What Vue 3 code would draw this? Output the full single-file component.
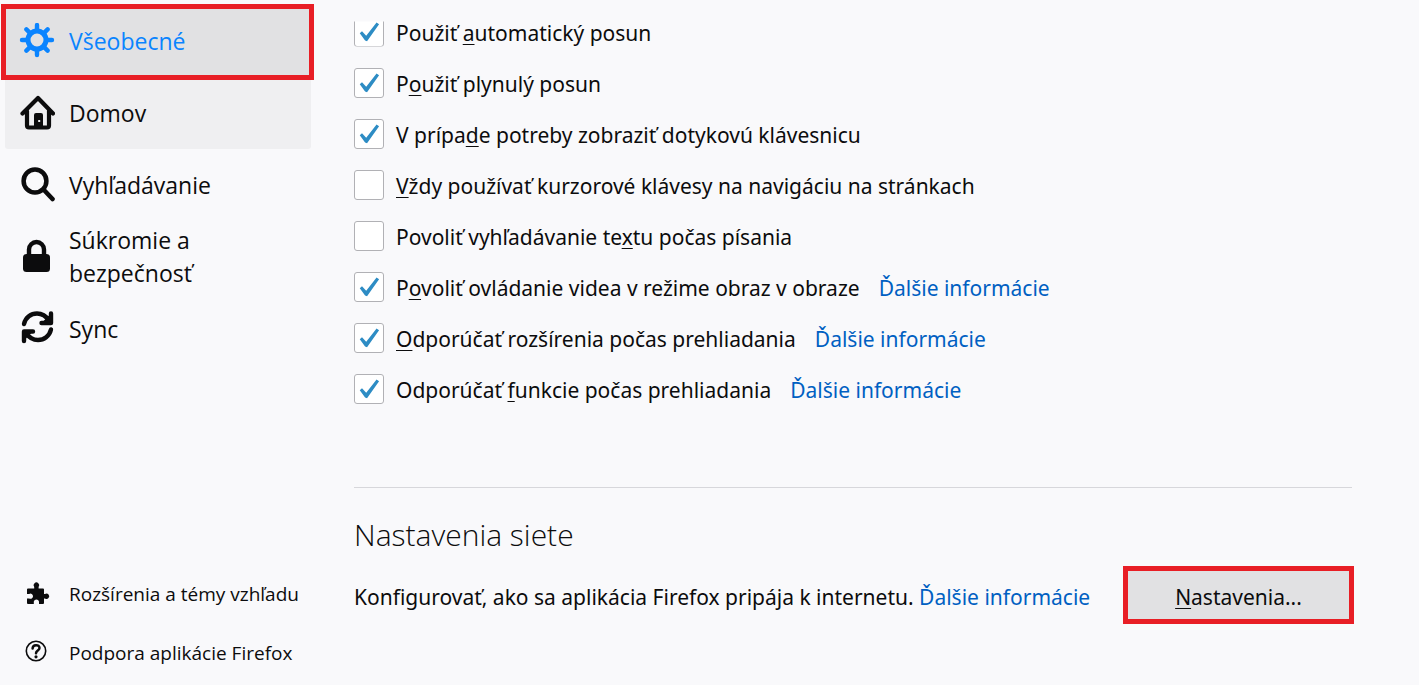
<template>
  <div class="preferences">
    <aside class="sidebar">
      <nav class="categories">
        <a
          v-for="item in categories"
          :key="item.id"
          href="#"
          class="category"
          :class="{ 'is-selected': item.id === selected, 'is-hovered': item.id === 'home' }"
          @click.prevent="selected = item.id"
        >
          <svg v-if="item.id === 'general'" class="icon" viewBox="0 0 36 36" fill="none" stroke="currentColor">
            <circle cx="18" cy="17" r="9" stroke-width="5" />
            <path
              d="M18 2v5M18 27v5M3 17h5M28 17h5M7.400 6.400l4 4M24.600 23.600l4 4M28.600 6.400l-4 4M11.400 23.600l-4 4"
              stroke-width="4.400"
              stroke-linecap="round"
            />
          </svg>
          <svg v-else-if="item.id === 'home'" class="icon" viewBox="0 0 36 36">
            <path
              d="M3.500 18.500 19 3l15 15.500M8 16v14.500q0 2 2 2h18q2 0 2-2V16"
              fill="none"
              stroke="currentColor"
              stroke-width="4.200"
              stroke-linecap="round"
              stroke-linejoin="round"
            />
            <path
              fill-rule="evenodd"
              fill="currentColor"
              d="M17 18h5q2 0 2 2V33h-9V20q0-2 2-2zM19.200 25v2h2v-2z"
            />
          </svg>
          <svg v-else-if="item.id === 'search'" class="icon" viewBox="0 0 36 36" fill="none" stroke="currentColor">
            <circle cx="16" cy="14" r="11.400" stroke-width="4.500" />
            <path d="M24.500 22.500l9 9.500" stroke-width="4.600" stroke-linecap="round" />
          </svg>
          <svg v-else-if="item.id === 'privacy'" class="icon" viewBox="0 0 36 36">
            <path d="M10 17v-6.500a7.500 7.500 0 0 1 15 0V17" fill="none" stroke="currentColor" stroke-width="4.400" />
            <rect x="4" y="15" width="27" height="18" rx="3.500" fill="currentColor" />
          </svg>
          <svg
            v-else
            class="icon"
            viewBox="0 2 36 36"
            fill="none"
            stroke="currentColor"
            stroke-width="4.400"
            stroke-linecap="round"
            stroke-linejoin="round"
          >
            <path d="M5 15C6.500 8.500 12 4.500 18 4.500c5 0 9 2.500 12 7M32 4.500v9.500h-9.500" />
            <path d="M25 13l6-6v6z" fill="currentColor" stroke-width="2" />
            <path d="M32 20.500c-1.500 6.500-7 10.500-13 10.500-5 0-9-2.500-12-7M5 32v-9.500h9" />
            <path d="M12 23l-6 6v-6z" fill="currentColor" stroke-width="2" />
          </svg>
          <span class="category-name">{{ item.name }}</span>
        </a>
      </nav>

      <div class="sidebar-footer">
        <a href="#" class="footer-link">
          <svg class="icon" viewBox="0 1 36 36">
            <path
              fill="currentColor"
              d="M8 12.500h6.200V11a2.800 2.800 0 1 1 4.400 0v1.500H23q1 0 1 1V18h1a2.700 2.700 0 1 1 0 4.500h-1V27q0 1-1 1h-4v-2.500a2.700 2.700 0 0 0-5.200 0V28H8q-1 0-1-1v-4.500h2.200a2.600 2.600 0 1 0 0-4.600H7v-4.400q0-1 1-1z"
            />
          </svg>
          <span>Rozšírenia a témy vzhľadu</span>
        </a>
        <a href="#" class="footer-link">
          <svg class="icon" viewBox="0 1 36 36" fill="none" stroke="currentColor">
            <circle cx="16" cy="16" r="9.700" stroke-width="1.600" />
            <path d="M12.600 13.600c0-4.600 6.900-4.400 6.900-.6 0 2.500-3.500 2.600-3.500 5.200" stroke-width="2.500" stroke-linecap="round" />
            <circle cx="16" cy="21.800" r="1.600" fill="currentColor" stroke="none" />
          </svg>
          <span>Podpora aplikácie Firefox</span>
        </a>
      </div>
    </aside>

    <main class="content">
      <div class="options">
        <div v-for="option in options" :key="option.id" class="option">
          <input :id="option.id" v-model="option.checked" type="checkbox" class="checkbox" />
          <label :for="option.id">{{ option.before }}<u>{{ option.key }}</u>{{ option.after }}</label>
          <a v-if="option.more" href="#" class="link">Ďalšie informácie</a>
        </div>
      </div>

      <section class="network">
        <h2 class="title">Nastavenia siete</h2>
        <div class="network-row">
          <p class="network-desc">
            Konfigurovať, ako sa aplikácia Firefox pripája k internetu.
            <a href="#" class="link">Ďalšie informácie</a>
          </p>
          <button type="button" class="settings-button"><u>N</u>astavenia...</button>
        </div>
      </section>
    </main>
  </div>
</template>

<script setup>
import { ref } from 'vue';

const selected = ref('general');

const categories = [
  { id: 'general', name: 'Všeobecné' },
  { id: 'home', name: 'Domov' },
  { id: 'search', name: 'Vyhľadávanie' },
  { id: 'privacy', name: 'Súkromie a bezpečnosť' },
  { id: 'sync', name: 'Sync' }
];

// key = písmeno klávesovej skratky, v popise je podčiarknuté
const options = ref([
  { id: 'autoScroll', before: 'Použiť ', key: 'a', after: 'utomatický posun', checked: true },
  { id: 'smoothScroll', before: 'P', key: 'o', after: 'užiť plynulý posun', checked: true },
  { id: 'touchKeyboard', before: 'V prípa', key: 'd', after: 'e potreby zobraziť dotykovú klávesnicu', checked: true },
  { id: 'cursorKeys', before: '', key: 'V', after: 'ždy používať kurzorové klávesy na navigáciu na stránkach', checked: false },
  { id: 'searchTyping', before: 'Povoliť vyhľadávanie te', key: 'x', after: 'tu počas písania', checked: false },
  { id: 'pictureInPicture', before: 'P', key: 'o', after: 'voliť ovládanie videa v režime obraz v obraze', checked: true, more: true },
  { id: 'recommendExtensions', before: '', key: 'O', after: 'dporúčať rozšírenia počas prehliadania', checked: true, more: true },
  { id: 'recommendFeatures', before: 'Odporúčať ', key: 'f', after: 'unkcie počas prehliadania', checked: true, more: true }
]);
</script>

<style>
body {
  background: #f9f9fb;
}
</style>

<style scoped>
.preferences {
  display: flex;
  box-sizing: border-box;
  min-height: 100vh;
  background: #f9f9fb;
  color: #0c0c0d;
  font-family: "Segoe UI", "Open Sans", "Noto Sans", sans-serif;
  font-size: 21px;
  line-height: 33px;
}

a {
  color: inherit;
  text-decoration: none;
}

u {
  text-decoration-thickness: 1px;
  text-underline-offset: 3px;
}

.icon {
  flex: none;
  width: 36px;
  height: 36px;
}

/* --- Bočný panel --- */
.sidebar {
  display: flex;
  flex: none;
  flex-direction: column;
  justify-content: space-between;
  box-sizing: border-box;
  width: 311px;
  padding: 5px 0 2px 5px;
}

.category {
  position: relative;
  display: flex;
  align-items: center;
  gap: 14px;
  box-sizing: border-box;
  min-height: 72px;
  padding: 0 60px 0 14px;
  border-radius: 3px;
  font-size: 23px;
}

.category.is-hovered {
  background: #efeff1;
}

.category.is-selected {
  background: #e1e1e3;
  color: #0a84ff;
}

.category.is-selected::after {
  content: "";
  position: absolute;
  z-index: 1;
  inset: -1px -3px -3px -4px;
  border: 5px solid #e81e25;
}

.footer-link {
  display: flex;
  align-items: center;
  gap: 13px;
  height: 59px;
  padding-left: 15px;
  font-size: 19px;
  white-space: nowrap;
}

/* --- Obsah --- */
.content {
  flex: 1;
  min-width: 0;
  padding: 6px 65px 0 43px;
  font-family: "Segoe UI", "Noto Sans", "Open Sans", sans-serif;
}

.option {
  display: flex;
  align-items: center;
  height: 51px;
}

.option label,
.option .link {
  padding-top: 3px;
}

.option label {
  margin-left: 12px;
}

.option .link {
  margin-left: 19px;
}

.checkbox {
  appearance: none;
  display: grid;
  box-sizing: border-box;
  width: 30px;
  height: 30px;
  margin: 0;
  border: 1px solid #b1b1b5;
  border-radius: 3px;
  background: #fff;
}

.checkbox:checked::before {
  content: "";
  background: #2d8cc4;
  clip-path: polygon(17% 56%, 25% 49%, 40% 65%, 77% 18%, 86% 24%, 43% 85%, 36% 82%);
}

/* prvý riadok je odrolovaný pod horný okraj */
.option:first-child .checkbox {
  clip-path: inset(5px 0 0);
}

.link {
  color: #0060c2;
}

.network {
  margin-top: 73px;
  margin-right: 2px;
  border-top: 1px solid #d7d7db;
}

.title {
  margin: 27px 0 11px;
  font-family: "Segoe UI", "Open Sans", "Noto Sans", sans-serif;
  font-size: 30px;
  font-weight: 300;
  line-height: 40px;
}

.network-row {
  display: flex;
  align-items: center;
  justify-content: space-between;
  margin-right: -2px;
}

.network-desc {
  margin: 0;
  padding-top: 5px;
}

.settings-button {
  width: 231px;
  height: 58px;
  padding: 5px 0 0;
  border: 5px solid #e81e25;
  background: #e1e1e3;
  color: inherit;
  font: inherit;
}
</style>
